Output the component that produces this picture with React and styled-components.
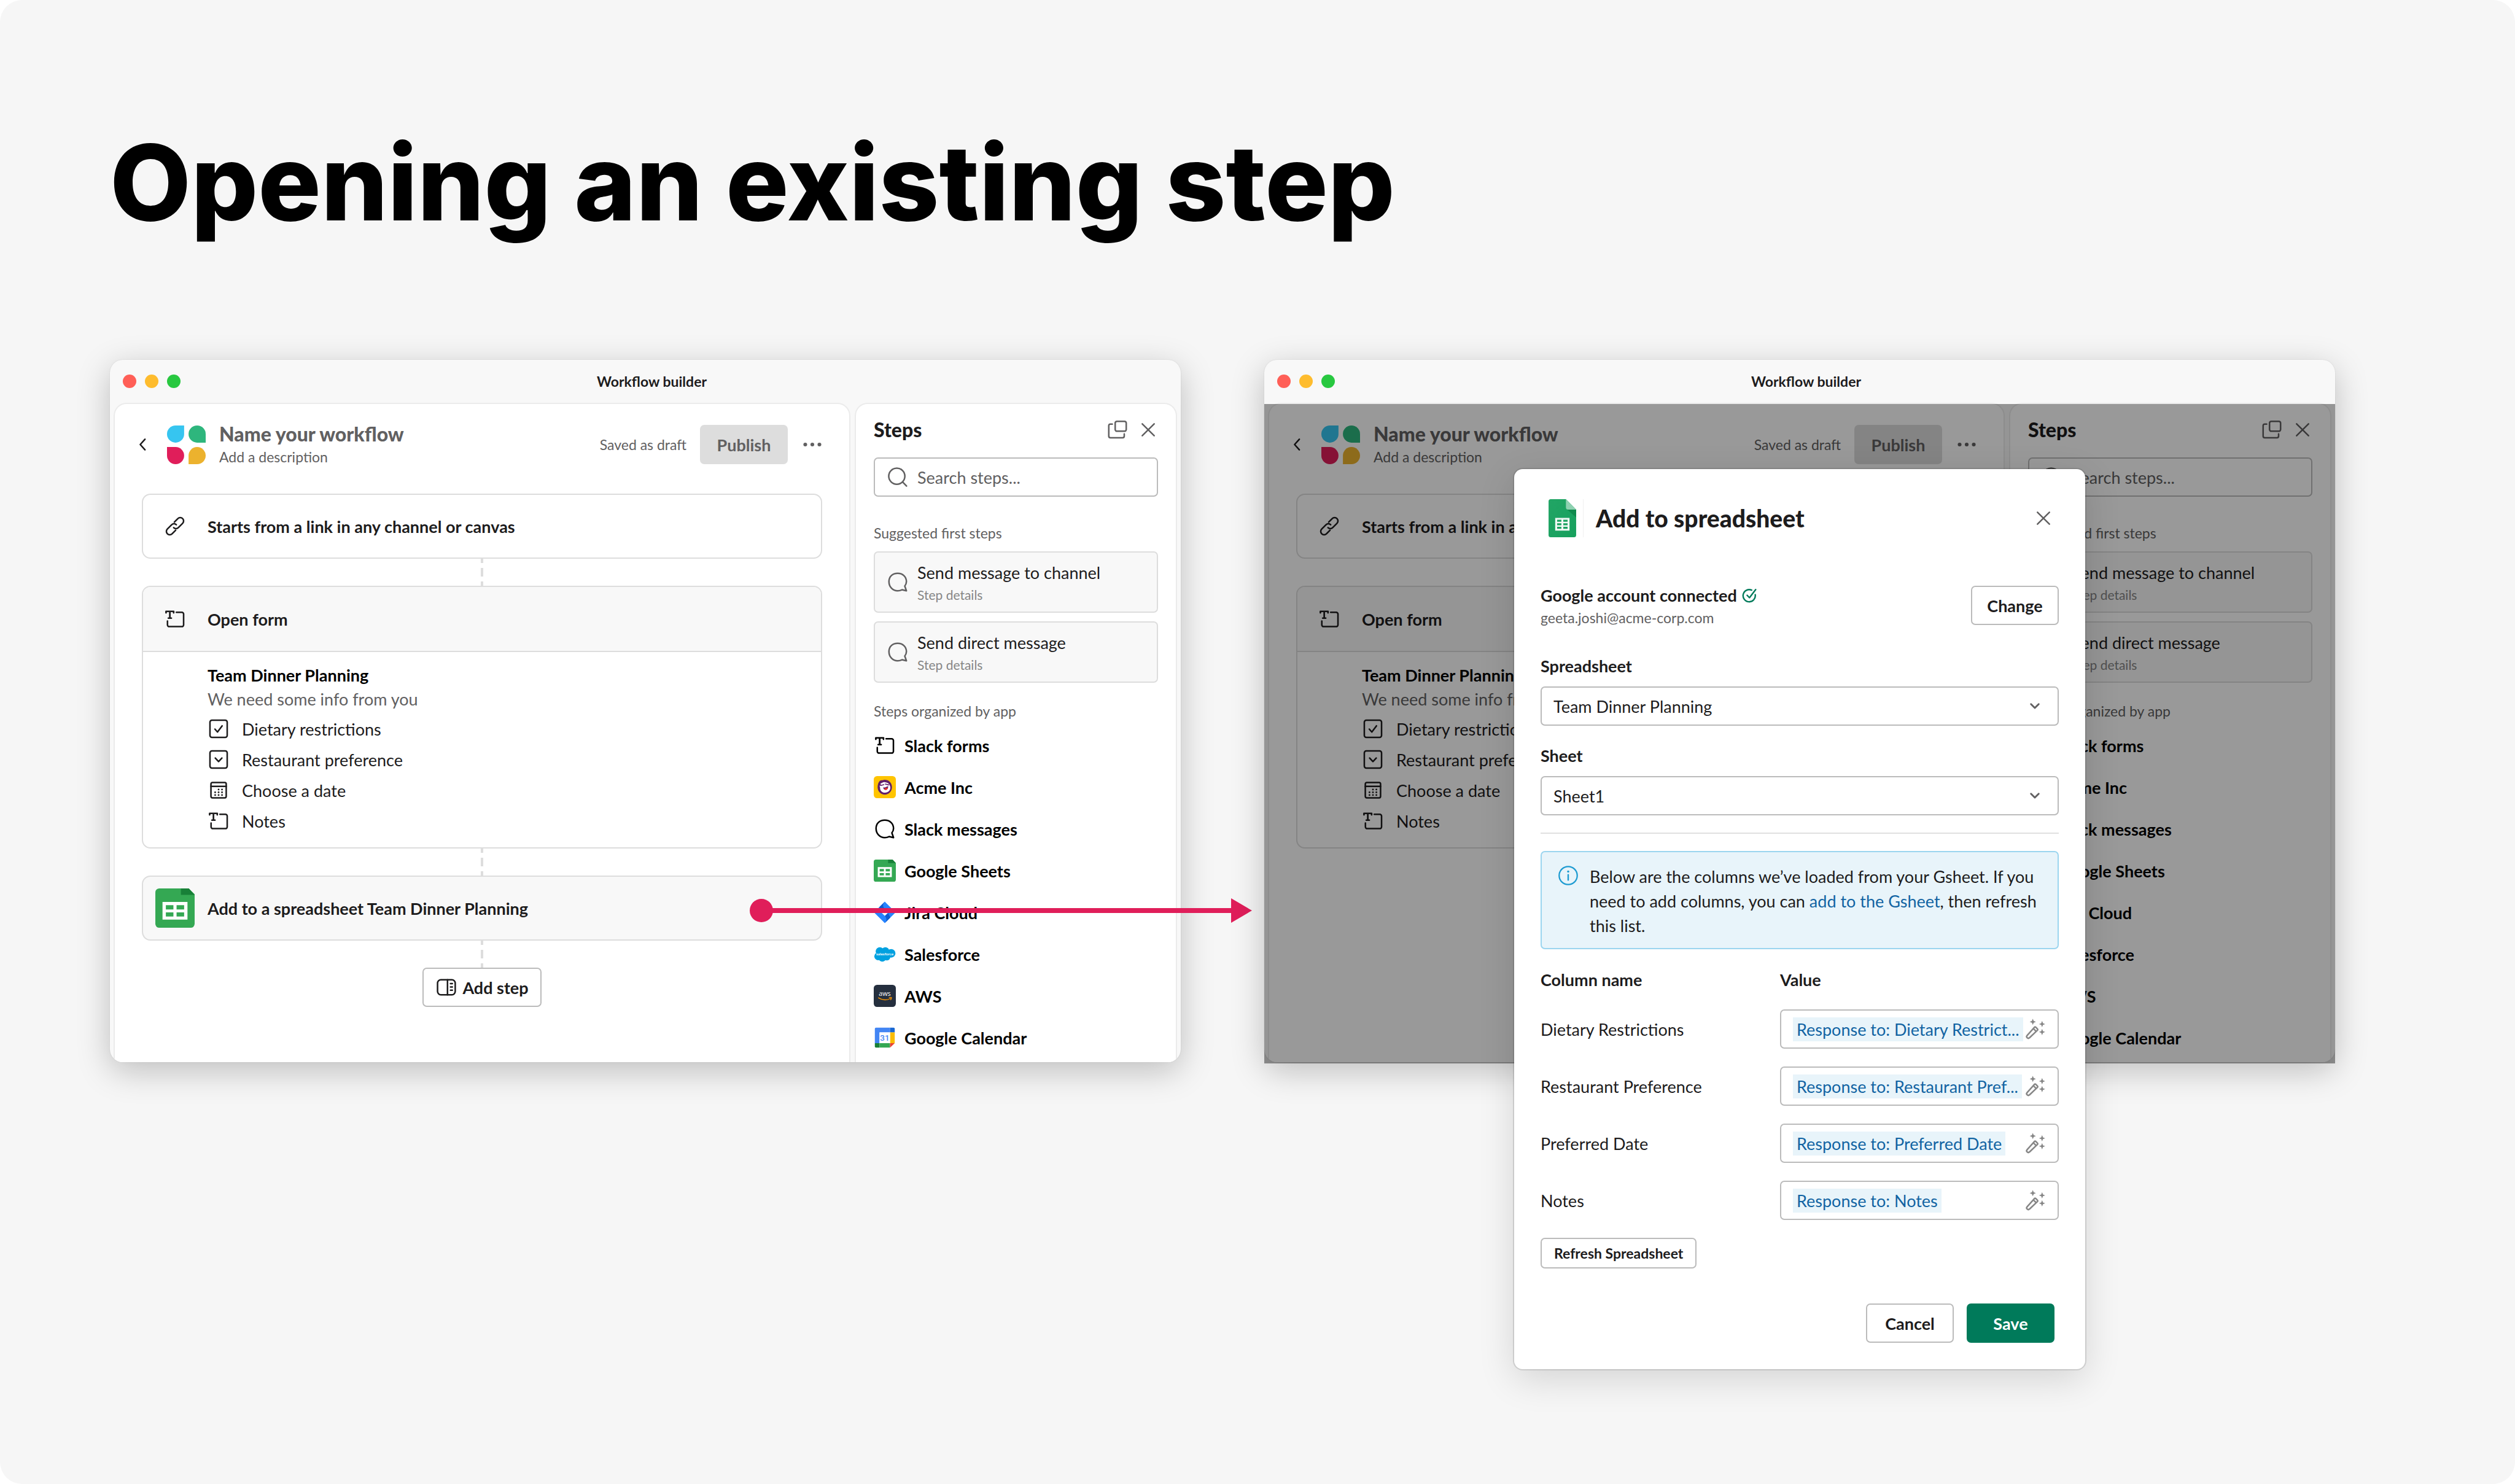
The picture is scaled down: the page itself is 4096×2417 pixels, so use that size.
import React, { useId } from "react";
import styled, { createGlobalStyle, css } from "styled-components";

const GlobalStyle = createGlobalStyle`
  *, *::before, *::after { box-sizing: border-box; }
  body {
    margin: 0;
    background: #fff;
    color: #1d1c1d;
    font-family: Lato, "Noto Sans", sans-serif;
    font-size: 27px;
    line-height: 39px;
  }
  h1, h2, h3, p, ul { margin: 0; padding: 0; }
  ul { list-style: none; }
  button, input, select { font: inherit; color: inherit; margin: 0; }
  svg { display: block; flex: none; }
`;

/* ---------- icons ---------- */

const Icon = ({ size = 36, children, viewBox = "0 0 20 20" }) => (
  <svg width={size} height={size} viewBox={viewBox} fill="none" stroke="currentColor"
    strokeWidth="1.4" strokeLinecap="round" strokeLinejoin="round" aria-hidden="true">
    {children}
  </svg>
);

const ChevronLeftIcon = () => <Icon><path d="M12.3 5.2 8 10l4.3 4.8" /></Icon>;
const ChevronDownIcon = () => <Icon><path d="m6.5 8.2 3.5 3.5 3.5-3.5" strokeWidth="1.6" /></Icon>;
const CloseIcon = () => <Icon><path d="m4.6 4.6 10.8 10.8M15.4 4.6 4.6 15.4" /></Icon>;
const DotsIcon = () => (
  <Icon>
    <g fill="currentColor" stroke="none">
      <circle cx="3.6" cy="10" r="1.7" /><circle cx="10" cy="10" r="1.7" /><circle cx="16.4" cy="10" r="1.7" />
    </g>
  </Icon>
);
const LinkIcon = () => (
  <Icon>
    <path d="m9.4 6.3 3.2-3.2a3 3 0 0 1 4.3 4.3l-3.9 3.9a3 3 0 0 1-4.2 0" />
    <path d="m10.6 13.7-3.2 3.2a3 3 0 0 1-4.3-4.3L7 8.7a3 3 0 0 1 4.2 0" />
  </Icon>
);
const FormIcon = () => (
  <Icon>
    <path d="M1.9 4.5V3.2h6.9v1.3M5.35 3.2v6M4 9.3h2.7" strokeWidth="1.5" />
    <path d="M11.2 4h5a1.6 1.6 0 0 1 1.6 1.6v9.8a1.6 1.6 0 0 1-1.6 1.6H4.8a1.6 1.6 0 0 1-1.6-1.6V12" />
  </Icon>
);
const CheckboxIcon = () => (
  <Icon>
    <rect x="2.2" y="2.2" width="15.6" height="15.6" rx="1.8" />
    <path d="m6.7 10.3 2.3 2.6 4.2-5.6" />
  </Icon>
);
const DropdownIcon = () => (
  <Icon>
    <rect x="2.2" y="2.2" width="15.6" height="15.6" rx="1.8" />
    <path d="m7 8.7 3 3.2 3-3.2" />
  </Icon>
);
const CalendarIcon = () => (
  <Icon>
    <rect x="3.1" y="3.1" width="13.8" height="13.8" rx="1.3" />
    <path d="M3.1 6.5h13.8" />
    <g fill="currentColor" stroke="none">
      {[[10, 9.4], [13.1, 9.4], [6.9, 11.9], [10, 11.9], [13.1, 11.9], [6.9, 14.4], [10, 14.4], [13.1, 14.4]].map(([x, y]) => (
        <circle key={`${x}-${y}`} cx={x} cy={y} r="0.8" />
      ))}
    </g>
  </Icon>
);
const PanelIcon = () => (
  <Icon>
    <rect x="2" y="3.2" width="16" height="13.6" rx="3" />
    <path d="M11 3.2v13.6M13.7 6.7h1.7M13.7 9.7h1.7M13.7 12.7h1.7" />
  </Icon>
);
const PopOutIcon = () => (
  <Icon>
    <rect x="7.9" y="2.3" width="10" height="9" rx="1.6" />
    <path d="M5.3 4.8H3.6A1.5 1.5 0 0 0 2.1 6.3v9.4a1.5 1.5 0 0 0 1.5 1.5h11a1.5 1.5 0 0 0 1.5-1.5v-2" />
  </Icon>
);
const SearchIcon = () => (
  <Icon><circle cx="9.2" cy="9.2" r="7.3" /><path d="m14.5 14.5 3.5 3.6" /></Icon>
);
const BubbleIcon = () => (
  <Icon>
    <path d="M10 2.1c4.6 0 7.9 3.2 7.9 7.5 0 1.5-.5 2.8-1.5 4l1.5 4.3-4-.9c-1.1.5-2.5.9-3.9.9-4.6 0-7.9-3.6-7.9-8.3S5.4 2.1 10 2.1z" />
  </Icon>
);
const ConnectedIcon = () => (
  <Icon size={24}>
    <path d="M13.2 2.6A8.3 8.3 0 1 0 18 8.8" strokeWidth="2" />
    <path d="m7 9.6 3.2 3.3L18.6 1.8" strokeWidth="2" />
  </Icon>
);
const InfoIcon = () => (
  <Icon size={32}>
    <circle cx="10" cy="10" r="9.2" />
    <path d="M10 9.2v5.4" strokeWidth="1.5" />
    <circle cx="10" cy="5.9" r="1.1" fill="currentColor" stroke="none" />
  </Icon>
);
const WandIcon = () => (
  <Icon>
    <path d="m10.2 8.3 1.5 1.5a1 1 0 0 1 0 1.4l-7.1 6.7a1.4 1.4 0 0 1-2.1-2.1l6.6-7.4a.8.8 0 0 1 1.1-.1zM8.2 9.7l2.2 2.2" />
    <g fill="currentColor" stroke="none">
      <path d="m7.6.7.8 2 2 .8-2 .8-.8 2-.8-2-2-.8 2-.8z" />
      <path d="m16 2.7.8 2 2 .8-2 .8-.8 2-.8-2-2-.8 2-.8z" />
      <path d="m16 9.9.8 2 2 .8-2 .8-.8 2-.8-2-2-.8 2-.8z" />
    </g>
  </Icon>
);

const WorkflowLogo = () => (
  <svg width="63" height="63" viewBox="0 0 70 70" aria-hidden="true">
    <path d="M31 0v15.5A15.5 15.5 0 1 1 15.5 0z" fill="#36c5f0" />
    <path d="M70 31H54.5A15.5 15.5 0 1 1 70 15.5z" fill="#2eb67d" />
    <path d="M0 39h15.5A15.5 15.5 0 1 1 0 54.5z" fill="#e01e5a" />
    <path d="M39 70V54.5A15.5 15.5 0 1 1 54.5 70z" fill="#ecb22e" />
  </svg>
);
const SheetsLogo = ({ size = 36 }) => (
  <svg width={size} height={size} viewBox="0 0 40 40" aria-hidden="true">
    <path d="M4 0h30l6 6v30a4 4 0 0 1-4 4H4a4 4 0 0 1-4-4V4a4 4 0 0 1 4-4z" fill="#34a853" />
    <path d="M26 0h8l6 6.5H26z" fill="#188038" />
    <path d="M7.3 13.7h25.4v18H7.3zM10.7 17v4.4h7.7V17zm10.9 0v4.4h7.7V17zm-10.9 7.4v4.2h7.7v-4.2zm10.9 0v4.2h7.7v-4.2z" fill="#fff" fillRule="evenodd" />
  </svg>
);
const AcmeLogo = () => (
  <svg width="36" height="36" viewBox="0 0 40 40" aria-hidden="true">
    <rect width="40" height="40" rx="6" fill="#ffc400" />
    <path d="M11 8.5c3-2 5-.5 7-1.5 7-1.5 15 4 15 13 0 8-6 13.5-13 13.5S7 28 7 20c0-5 1.5-9 4-11.5z" fill="#611f69" />
    <path d="M12 14c3-1.5 5-3.5 8-3 4 .3 9 2 10 9 .5 6-4 10-9.5 10S11 26 11.5 21l-1-3.5 3-.5z" fill="#fff" />
    <path d="m13 17 5-1.5M21 14.5l6 1.5" stroke="#611f69" strokeWidth="1.8" strokeLinecap="round" />
    <path d="M17 20.5h3.5L26 18c.5 4-1.500 7-4.500 7s-4-2-4.500-4.500z" fill="#611f69" />
    <path d="M19 23c2-1.5 4-2 6.5-1.5-.5 2.500-2 3.500-4 3.500-1 0-2-.8-2.500-2z" fill="#f5301f" />
  </svg>
);
const JiraLogo = () => (
  <svg width="36" height="36" viewBox="0 0 40 40" aria-hidden="true">
    <path d="M20 .5 39.5 20 20 39.5.5 20z" fill="#2684ff" />
    <path d="M20 .5c-4 4-4 9 0 13.2L14 19l-4-8.500z" fill="#0f5bd0" />
    <path d="M20 39.5c4-4 4-9 0-13.2L26 21l4 8.500z" fill="#0f5bd0" />
    <path d="m20 14 6.200 6.200L20 26.400l-6.200-6.200z" fill="#fff" />
  </svg>
);
const SalesforceLogo = () => (
  <svg width="36" height="36" viewBox="0 0 40 40" aria-hidden="true">
    <g fill="#00a1e0">
      <circle cx="11" cy="15" r="7.5" /><circle cx="21" cy="14.5" r="7" /><circle cx="31.5" cy="18.5" r="7.8" />
      <circle cx="8" cy="24" r="7" /><circle cx="15.5" cy="26.5" r="7" /><circle cx="23.5" cy="25" r="6.5" />
      <rect x="8" y="14" width="22" height="12" />
    </g>
    <text x="20" y="22" fill="#fff" fontSize="7" fontWeight="700" textAnchor="middle" fontFamily="Lato, sans-serif">salesforce</text>
  </svg>
);
const AwsLogo = () => (
  <svg width="36" height="36" viewBox="0 0 40 40" aria-hidden="true">
    <rect width="40" height="40" rx="6" fill="#252f3e" />
    <text x="20" y="20.5" fill="#fff" fontSize="12" textAnchor="middle" fontFamily='"Open Sans", sans-serif' fontWeight="500">aws</text>
    <path d="M8.5 23.5c7 4.5 15.5 4.5 22 1.2" fill="none" stroke="#f90" strokeWidth="1.5" strokeLinecap="round" />
    <path d="M28 23.2c1.5-.6 3-.6 4.200-.2 0 1.500-.5 3-1.500 4.200" fill="none" stroke="#f90" strokeWidth="1.3" strokeLinecap="round" />
  </svg>
);
const GoogleCalendarLogo = () => (
  <svg width="36" height="36" viewBox="0 0 40 40" aria-hidden="true">
    <path d="M4 2h25.5v8.5h-19V30H2V4a2 2 0 0 1 2-2z" fill="#4285f4" />
    <path d="M29.5 2H36a2 2 0 0 1 2 2v6.5h-8.500z" fill="#1967d2" />
    <path d="M29.5 10.5H38V30h-8.500z" fill="#fbbc04" />
    <path d="M2 30h8.500v8H4a2 2 0 0 1-2-2z" fill="#188038" />
    <path d="M10.5 30h19v8h-19z" fill="#34a853" />
    <path d="M29.5 30H38l-8.500 8z" fill="#ea4335" />
    <path d="M10.5 10.5h19V30h-19z" fill="#fff" />
    <text x="20" y="25.5" fill="#4285f4" fontSize="15" textAnchor="middle" fontWeight="500" fontFamily="Roboto, sans-serif">31</text>
  </svg>
);
const SheetsDocLogo = () => (
  <svg width="45" height="62" viewBox="0 0 50 69" aria-hidden="true">
    <defs>
      <linearGradient id="docShade" x1="0" y1="0" x2="1" y2="1">
        <stop offset="0" stopColor="#22a565" /><stop offset="1" stopColor="#16a05d" />
      </linearGradient>
    </defs>
    <path d="M4 0h27.5L50 19v46a4 4 0 0 1-4 4H4a4 4 0 0 1-4-4V4a4 4 0 0 1 4-4z" fill="url(#docShade)" />
    <path d="M33 18 50 33V19z" fill="#0f8a4d" />
    <path d="M31.5 0 50 19H35.5a4 4 0 0 1-4-4z" fill="#8ed1b1" />
    <path d="M12 34h26v23H12zM15.5 37.2v3.6h7.7v-3.6zm11.2 0v3.6h7.8v-3.6zm-11.2 6.5v3.6h7.7v-3.6zm11.2 0v3.6h7.8v-3.6zm-11.2 6.5v3.6h7.7v-3.6zm11.2 0v3.6h7.8v-3.6z" fill="#f1f8f5" fillRule="evenodd" />
  </svg>
);

/* ---------- page ---------- */

const Board = styled.main`
  min-height: 100vh;
  padding: 190px 293px 187px 179px;
  background: #f6f6f6;
  border-radius: 36px;
`;
const Headline = styled.h1`
  margin-bottom: 182px;
  color: #000;
  font-family: Inter, sans-serif;
  font-size: 171px;
  font-weight: 800;
  line-height: 214px;
`;
const Comparison = styled.div`
  display: grid;
  grid-template-columns: 1fr 1fr;
  align-items: start;
  gap: 136px;
`;
const Stage = styled.div`
  position: relative;
`;

/* ---------- window ---------- */

const Frame = styled.section`
  overflow: hidden;
  background: #f8f8f8;
  border-radius: 21px;
  box-shadow: 0 0 2px rgba(0, 0, 0, 0.12), 0 14px 54px rgba(0, 0, 0, 0.23);
`;
const TitleBar = styled.header`
  display: grid;
  grid-template-columns: 1fr auto 1fr;
  align-items: center;
  height: 70px;
  padding-left: 21px;
`;
const Lights = styled.div`
  display: flex;
  gap: 14px;
`;
const Light = styled.span`
  width: 22px;
  height: 22px;
  border-radius: 50%;
  background: ${(p) => p.$color};
`;
const WindowTitle = styled.h2`
  font-size: 23px;
  font-weight: 700;
  line-height: 34px;
`;
const Panels = styled.div`
  display: grid;
  grid-template-columns: minmax(0, 1fr) 525px;
  gap: 7px;
  padding: 0 6px;
`;
const panel = css`
  background: #fff;
  border: 2px solid #ebebeb;
  border-bottom: 0;
  border-radius: 21px 21px 0 0;
`;
const Builder = styled.div`
  ${panel}
  padding: 29px 44px 0;
`;
const Sidebar = styled.aside`
  ${panel}
  padding: 22px 29px;
`;

const IconButton = styled.button`
  display: grid;
  place-items: center;
  width: 36px;
  height: 36px;
  padding: 0;
  border: 0;
  background: none;
  color: ${(p) => p.$color || "#616061"};
`;
const Button = styled.button`
  display: inline-flex;
  align-items: center;
  justify-content: center;
  gap: 8px;
  height: 64px;
  min-width: 143px;
  padding: 0 19px;
  border: 2px solid #bbb;
  border-radius: 7px;
  background: #fff;
  font-size: 27px;
  font-weight: 700;
  line-height: 39px;
  ${(p) => p.$tone === "muted" && css`background: #ddd; border-color: #ddd; color: #616061;`}
  ${(p) => p.$tone === "primary" && css`background: #007a5a; border-color: #007a5a; color: #fff;`}
  ${(p) => p.$small && css`height: 50px; padding: 0 20px; font-size: 23px; line-height: 34px;`}
`;

const WorkflowHeader = styled.div`
  display: flex;
  align-items: center;
  gap: 22px;
  margin: 0 -2px 43px -17px;
`;
const WorkflowName = styled.div`
  flex: 1;
  color: #616061;
  h3 { font-size: 32px; font-weight: 900; line-height: 40px; }
  p { font-size: 23px; line-height: 34px; }
`;
const DraftNote = styled.span`
  color: #616061;
  font-size: 23px;
`;

const Flow = styled.div`
  display: flex;
  flex-direction: column;
  align-items: center;
`;
const StepCard = styled.article`
  align-self: stretch;
  border: 2px solid #ddd;
  border-radius: 14px;
  background: ${(p) => (p.$shaded ? "#f8f8f8" : "#fff")};
`;
const StepHead = styled.div`
  display: flex;
  align-items: center;
  gap: 21px;
  height: 102px;
  padding: 0 20px;
  font-weight: 700;
`;
const FormHead = styled(StepHead)`
  height: 106px;
  background: #f8f8f8;
  border-bottom: 2px solid #ddd;
  border-radius: 12px 12px 0 0;
`;
const Lead = styled.span`
  display: grid;
  place-items: center;
  width: 64px;
`;
const FormBody = styled.div`
  padding: 18px 105px;
`;
const FormTitle = styled.p`
  color: #000;
  font-weight: 700;
`;
const FormNote = styled.p`
  color: #616061;
`;
const FieldList = styled.ul`
  margin-top: 4px;
  li { display: flex; align-items: center; gap: 20px; height: 50px; }
`;
const Connector = styled.div`
  width: 4px;
  height: 44px;
  background: linear-gradient(#ddd 0 7px, transparent 7px 15px, #ddd 15px 29px, transparent 29px 37px, #ddd 37px);
`;

const SidebarHead = styled.div`
  display: flex;
  align-items: center;
  gap: 14px;
  margin: 0 -2px 25px 0;
  h3 { flex: 1; font-size: 32px; font-weight: 900; line-height: 40px; }
`;
const SearchBox = styled.label`
  display: flex;
  align-items: center;
  gap: 14px;
  height: 64px;
  padding: 0 19px;
  border: 2px solid #bbb;
  border-radius: 7px;
  color: #616061;
  input {
    flex: 1;
    min-width: 0;
    padding: 0;
    border: 0;
    outline: 0;
    background: none;
  }
  input::placeholder { color: #616061; opacity: 1; }
`;
const GroupLabel = styled.h3`
  margin-top: ${(p) => p.$gap}px;
  color: #616061;
  font-size: 23px;
  font-weight: 400;
  line-height: 30px;
`;
const Suggestions = styled.ul`
  display: grid;
  gap: 14px;
  margin-top: 15px;
`;
const Suggestion = styled.button`
  display: flex;
  align-items: center;
  gap: 14px;
  width: 100%;
  height: 100px;
  padding: 0 19px;
  border: 2px solid #ddd;
  border-radius: 7px;
  background: #f8f8f8;
  text-align: left;
  svg { color: #616061; }
`;
const SuggestionText = styled.span`
  display: grid;
  padding-top: 4px;
  line-height: 38px;
  small { color: #868686; font-size: 21px; line-height: 34px; }
`;
const AppList = styled.ul`
  display: grid;
  gap: 32px;
  margin-top: 23px;
`;
const AppLink = styled.button`
  display: flex;
  align-items: center;
  gap: 14px;
  width: 100%;
  height: 36px;
  padding: 0;
  border: 0;
  background: none;
  color: #000;
  font-weight: 700;
  text-align: left;
`;

const formFields = [
  [CheckboxIcon, "Dietary restrictions"],
  [DropdownIcon, "Restaurant preference"],
  [CalendarIcon, "Choose a date"],
  [FormIcon, "Notes"],
];
const suggestions = ["Send message to channel", "Send direct message"];
const apps = [
  [FormIcon, "Slack forms"],
  [AcmeLogo, "Acme Inc"],
  [BubbleIcon, "Slack messages"],
  [SheetsLogo, "Google Sheets"],
  [JiraLogo, "Jira Cloud"],
  [SalesforceLogo, "Salesforce"],
  [AwsLogo, "AWS"],
  [GoogleCalendarLogo, "Google Calendar"],
];

function WorkflowWindow({ hasSheetStep }) {
  const searchId = useId();
  return (
    <Frame>
      <TitleBar>
        <Lights>
          <Light $color="#ff5f57" />
          <Light $color="#febc2e" />
          <Light $color="#28c840" />
        </Lights>
        <WindowTitle>Workflow builder</WindowTitle>
      </TitleBar>
      <Panels>
        <Builder>
          <WorkflowHeader>
            <IconButton aria-label="Back" $color="#1d1c1d"><ChevronLeftIcon /></IconButton>
            <WorkflowLogo />
            <WorkflowName>
              <h3>Name your workflow</h3>
              <p>Add a description</p>
            </WorkflowName>
            <DraftNote>Saved as draft</DraftNote>
            <Button $tone="muted">Publish</Button>
            <IconButton aria-label="More"><DotsIcon /></IconButton>
          </WorkflowHeader>
          <Flow>
            <StepCard>
              <StepHead><Lead><LinkIcon /></Lead>Starts from a link in any channel or canvas</StepHead>
            </StepCard>
            <Connector />
            <StepCard>
              <FormHead><Lead><FormIcon /></Lead>Open form</FormHead>
              <FormBody>
                <FormTitle>Team Dinner Planning</FormTitle>
                <FormNote>We need some info from you</FormNote>
                <FieldList>
                  {formFields.map(([Glyph, name]) => (
                    <li key={name}><Glyph />{name}</li>
                  ))}
                </FieldList>
              </FormBody>
            </StepCard>
            {hasSheetStep && (
              <>
                <Connector />
                <StepCard $shaded>
                  <StepHead><Lead><SheetsLogo size={64} /></Lead>Add to a spreadsheet Team Dinner Planning</StepHead>
                </StepCard>
                <Connector />
                <Button><PanelIcon />Add step</Button>
              </>
            )}
          </Flow>
        </Builder>
        <Sidebar>
          <SidebarHead>
            <h3>Steps</h3>
            <IconButton aria-label="Open in new window"><PopOutIcon /></IconButton>
            <IconButton aria-label="Close steps"><CloseIcon /></IconButton>
          </SidebarHead>
          <SearchBox htmlFor={searchId}>
            <SearchIcon />
            <input id={searchId} type="text" placeholder="Search steps..." aria-label="Search steps" />
          </SearchBox>
          <GroupLabel $gap={44}>Suggested first steps</GroupLabel>
          <Suggestions>
            {suggestions.map((name) => (
              <li key={name}>
                <Suggestion>
                  <BubbleIcon />
                  <SuggestionText>{name}<small>Step details</small></SuggestionText>
                </Suggestion>
              </li>
            ))}
          </Suggestions>
          <GroupLabel $gap={31}>Steps organized by app</GroupLabel>
          <AppList>
            {apps.map(([Logo, name]) => (
              <li key={name}><AppLink><Logo />{name}</AppLink></li>
            ))}
          </AppList>
        </Sidebar>
      </Panels>
    </Frame>
  );
}

/* ---------- arrow and dialog ---------- */

const ArrowLayer = styled.svg`
  position: absolute;
  top: 877px;
  right: -116px;
  pointer-events: none;
`;
const Backdrop = styled.div`
  position: absolute;
  inset: 72px 0 -2px;
  background: rgba(0, 0, 0, 0.4);
`;
const Dialog = styled.section`
  position: absolute;
  top: 178px;
  left: 0;
  right: 0;
  width: 930px;
  margin: 0 auto;
  padding: 49px 43px 43px;
  border-radius: 14px;
  background: #fff;
  box-shadow: 0 0 0 2px rgba(29, 28, 29, 0.13), 0 16px 60px rgba(0, 0, 0, 0.14);
`;
const DialogHead = styled.div`
  display: flex;
  align-items: center;
  margin-bottom: 73px;
  padding: 0 7px 0 13px;
  h2 {
    flex: 1;
    margin-left: 11px;
    padding-left: 20px;
    border-left: 1px solid #f0f0f0;
    font-size: 39px;
    font-weight: 900;
    line-height: 62px;
  }
`;
const Account = styled.div`
  display: flex;
  align-items: center;
  justify-content: space-between;
`;
const AccountText = styled.div`
  padding-top: 4px;
  line-height: 36px;
  strong { display: flex; align-items: center; gap: 8px; }
  strong svg { color: #007a5a; }
  p { color: #616061; font-size: 23px; }
`;
const Field = styled.div`
  display: grid;
  gap: 14px;
  margin-top: ${(p) => p.$gap}px;
  label { font-weight: 700; }
`;
const SelectBox = styled.div`
  display: grid;
  align-items: center;
  select, svg { grid-area: 1 / 1; }
  svg { justify-self: end; margin-right: 21px; color: #616061; pointer-events: none; }
  select {
    appearance: none;
    width: 100%;
    height: 64px;
    padding: 0 60px 0 19px;
    border: 2px solid #bbb;
    border-radius: 7px;
    background: #fff;
  }
`;
const Divider = styled.hr`
  height: 2px;
  margin: 28px 0;
  border: 0;
  background: #e0e0e0;
`;
const Notice = styled.div`
  display: flex;
  gap: 19px;
  padding: 20px 27px 16px;
  border: 2px solid #9bd5ef;
  border-radius: 7px;
  background: #e8f4fa;
  line-height: 40px;
  svg { margin-top: 2px; color: #1d9bd1; }
  a { color: #1264a3; text-decoration: none; }
`;
const Mapping = styled.table`
  width: 100%;
  margin-top: 30px;
  border-collapse: collapse;
  text-align: left;
  th, td { padding: 0; }
  thead th:first-child { width: 390px; }
  tbody th { font-weight: 400; }
  tbody th, tbody td { padding-top: 29px; }
`;
const ValueBox = styled.div`
  display: flex;
  align-items: center;
  justify-content: space-between;
  height: 64px;
  padding: 0 18px 0 19px;
  border: 2px solid #bbb;
  border-radius: 7px;
`;
const Token = styled.input`
  field-sizing: content;
  height: 39px;
  padding: 0 6px;
  border: 0;
  outline: 0;
  background: #e8f4fa;
  color: #1264a3;
`;
const RefreshRow = styled.div`
  display: flex;
  margin: 29px 0 57px;
`;
const DialogFoot = styled.footer`
  display: flex;
  justify-content: flex-end;
  gap: 21px;
  padding-right: 7px;
`;

const mappings = [
  ["Dietary Restrictions", "Response to: Dietary Restrict..."],
  ["Restaurant Preference", "Response to: Restaurant Pref..."],
  ["Preferred Date", "Response to: Preferred Date"],
  ["Notes", "Response to: Notes"],
];

function SelectField({ label, value, gap }) {
  const id = useId();
  return (
    <Field $gap={gap}>
      <label htmlFor={id}>{label}</label>
      <SelectBox>
        <select id={id} defaultValue={value}><option>{value}</option></select>
        <ChevronDownIcon />
      </SelectBox>
    </Field>
  );
}

function SpreadsheetDialog() {
  const base = useId();
  return (
    <Dialog role="dialog" aria-label="Add to spreadsheet">
      <DialogHead>
        <SheetsDocLogo />
        <h2>Add to spreadsheet</h2>
        <IconButton aria-label="Close"><CloseIcon /></IconButton>
      </DialogHead>
      <Account>
        <AccountText>
          <strong>Google account connected<ConnectedIcon /></strong>
          <p>geeta.joshi@acme-corp.com</p>
        </AccountText>
        <Button>Change</Button>
      </Account>
      <SelectField label="Spreadsheet" value="Team Dinner Planning" gap={41} />
      <SelectField label="Sheet" value="Sheet1" gap={29} />
      <Divider />
      <Notice>
        <InfoIcon />
        <p>
          Below are the columns we’ve loaded from your Gsheet. If you need to add columns, you
          can <a href="#gsheet">add to the Gsheet</a>, then refresh this list.
        </p>
      </Notice>
      <Mapping>
        <thead>
          <tr><th scope="col">Column name</th><th scope="col">Value</th></tr>
        </thead>
        <tbody>
          {mappings.map(([name, value], i) => (
            <tr key={name}>
              <th scope="row"><label htmlFor={`${base}-${i}`}>{name}</label></th>
              <td>
                <ValueBox>
                  <Token id={`${base}-${i}`} type="text" defaultValue={value} />
                  <IconButton aria-label={`Insert variable for ${name}`} $color="#868686"><WandIcon /></IconButton>
                </ValueBox>
              </td>
            </tr>
          ))}
        </tbody>
      </Mapping>
      <RefreshRow><Button $small>Refresh Spreadsheet</Button></RefreshRow>
      <DialogFoot>
        <Button>Cancel</Button>
        <Button $tone="primary">Save</Button>
      </DialogFoot>
    </Dialog>
  );
}

export default function App() {
  return (
    <>
      <GlobalStyle />
      <Board>
        <Headline>Opening an existing step</Headline>
        <Comparison>
          <Stage>
            <WorkflowWindow hasSheetStep />
            <ArrowLayer width="818" height="40" viewBox="0 0 818 40" fill="#e01e5a" aria-hidden="true">
              <circle cx="19" cy="20" r="19" />
              <path d="M19 16h765V0l34 20-34 20V24H19z" />
            </ArrowLayer>
          </Stage>
          <Stage>
            <WorkflowWindow />
            <Backdrop />
            <SpreadsheetDialog />
          </Stage>
        </Comparison>
      </Board>
    </>
  );
}
